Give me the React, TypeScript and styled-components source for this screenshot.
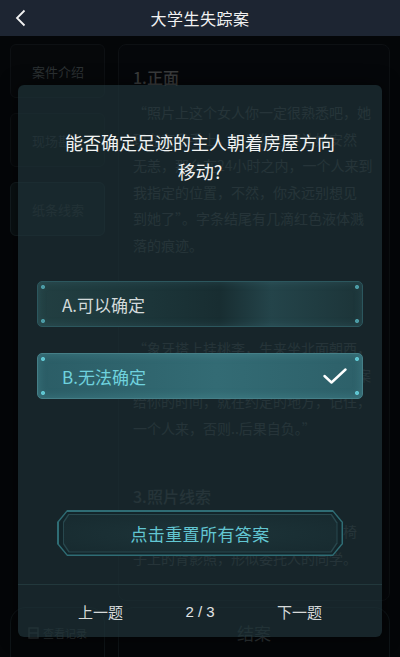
import React from 'react';
import styled, { createGlobalStyle } from 'styled-components';

const GlobalStyle = createGlobalStyle`
  html, body {
    margin: 0;
    padding: 0;
    background: #040608;
  }
  body {
    font-family: "Noto Sans CJK SC", "Noto Sans", sans-serif;
    -webkit-font-smoothing: antialiased;
  }
  * {
    box-sizing: border-box;
  }
`;

const chamfer = (x: number, y: number) =>
  `polygon(${x}px 0, calc(100% - ${x}px) 0, 100% ${y}px, 100% calc(100% - ${y}px), calc(100% - ${x}px) 100%, ${x}px 100%, 0 calc(100% - ${y}px), 0 ${y}px)`;

const Screen = styled.div`
  position: relative;
  width: 400px;
  height: 657px;
  overflow: hidden;
  display: flex;
  flex-direction: column;
  background: #040608;
`;

const Header = styled.header`
  flex: none;
  height: 36px;
  display: grid;
  grid-template-columns: 44px 1fr 44px;
  align-items: center;
  background: #1d2532;
`;

const BackButton = styled.button`
  display: flex;
  align-items: center;
  justify-content: flex-start;
  padding: 0 0 0 15px;
  height: 100%;
  border: 0;
  background: none;
  color: #f2f2f2;
`;

const Title = styled.h1`
  margin: 0;
  text-align: center;
  font-size: 16px;
  font-weight: 400;
  color: #f2f2f2;
  letter-spacing: 0.5px;
`;

const Body = styled.div`
  flex: 1;
  min-height: 0;
  display: flex;
  gap: 13px;
  padding: 8px 10px 6px;
`;

const Sidebar = styled.nav`
  width: 95px;
  flex: none;
  display: flex;
  flex-direction: column;
  gap: 15px;
`;

const Tab = styled.div<{ $active?: boolean }>`
  height: 54px;
  display: flex;
  align-items: center;
  padding-left: 21px;
  border-radius: 6px;
  border: 1px solid ${(p) => (p.$active ? '#141d20' : '#0d1013')};
  background: ${(p) => (p.$active ? '#0a1113' : '#06080a')};
  color: #2c3133;
  font-size: 13px;
`;

const Panel = styled.section`
  flex: 1;
  min-width: 0;
  padding: 21px 8px 0 14px;
  border-radius: 8px;
  border: 1px solid #0d1013;
  background: #05070a;
  overflow: hidden;
`;

const Section = styled.div`
  margin-bottom: 44px;
`;

const SectionTitle = styled.h3`
  margin: 0 0 11px;
  font-size: 16px;
  line-height: 22px;
  font-weight: 500;
  color: #3a3c3d;
`;

const Paragraph = styled.p`
  margin: 0;
  font-size: 14px;
  line-height: 26.5px;
  color: #3a3c3d;
`;

const Line = styled.span`
  display: block;
  white-space: nowrap;
`;

const BottomBar = styled.div`
  flex: none;
  height: 50px;
  display: flex;
  gap: 13px;
  padding: 0 10px;
`;

const BarButton = styled.div<{ $wide?: boolean }>`
  flex: ${(p) => (p.$wide ? 1 : 'none')};
  width: ${(p) => (p.$wide ? 'auto' : '95px')};
  display: flex;
  align-items: center;
  justify-content: center;
  gap: 4px;
  border-radius: 16px 16px 0 0;
  border: 1px solid #0e1417;
  border-bottom: 0;
  color: #2c3234;
  font-size: ${(p) => (p.$wide ? '17px' : '11px')};
`;

const Modal = styled.div`
  position: absolute;
  left: 18px;
  top: 85px;
  width: 364px;
  height: 552px;
  display: flex;
  flex-direction: column;
  border-radius: 6px;
  background: rgba(31, 50, 56, 0.72);
  box-shadow: 0 0 18px rgba(0, 0, 0, 0.55);
`;

const Question = styled.h2`
  margin: 43px 40px 0;
  font-size: 18px;
  line-height: 29px;
  font-weight: 400;
  text-align: center;
  color: #f1f3f3;
`;

const OptionList = styled.div`
  margin: 95px 19px 0;
  display: flex;
  flex-direction: column;
  gap: 26px;
`;

const dots = (c: string) =>
  [
    `radial-gradient(circle at 5px 5px, ${c} 1.6px, transparent 2.4px)`,
    `radial-gradient(circle at 5px calc(100% - 5px), ${c} 1.6px, transparent 2.4px)`,
    `radial-gradient(circle at calc(100% - 5px) 5px, ${c} 1.6px, transparent 2.4px)`,
    `radial-gradient(circle at calc(100% - 5px) calc(100% - 5px), ${c} 1.6px, transparent 2.4px)`,
  ].join(', ');

const Option = styled.button<{ $selected?: boolean }>`
  height: 46px;
  display: flex;
  align-items: center;
  justify-content: space-between;
  padding: 0 15px 0 24px;
  border-radius: 5px;
  font-family: inherit;
  font-size: 17px;
  text-align: left;
  border: 1.5px solid ${(p) => (p.$selected ? '#457f87' : '#2c575e')};
  color: ${(p) => (p.$selected ? '#6fd2de' : '#d3dadb')};
  background: ${(p) =>
    p.$selected
      ? `${dots('#5fc6d2')}, linear-gradient(90deg, #2b5d66 0%, #336b74 55%, #2d6069 100%)`
      : `${dots('#4b9aa4')}, linear-gradient(90deg, #223f42 0%, #1c3539 35%, #182d31 56%, #24444a 72%, #1c3438 100%)`};
  box-shadow: inset 0 0 10px rgba(110, 190, 200, ${(p) => (p.$selected ? 0.25 : 0.15)});
`;

const ResetFrame = styled.button`
  margin: 111px 39px 0;
  height: 46px;
  padding: 1.5px;
  border: 0;
  clip-path: ${chamfer(10, 12)};
  background: #2f6d75;
  font-family: inherit;
`;

const ResetGap = styled.div`
  height: 100%;
  padding: 2px 4px;
  clip-path: ${chamfer(9, 11)};
  background: #13252a;
`;

const ResetInner = styled.div`
  height: 100%;
  padding: 1px;
  clip-path: ${chamfer(6, 9)};
  background: #28484e;
`;

const ResetCore = styled.div`
  height: 100%;
  display: flex;
  align-items: center;
  justify-content: center;
  clip-path: ${chamfer(6, 9)};
  background: radial-gradient(ellipse at center, #1d3439 0%, #172a2f 100%);
  color: #62c6d2;
  font-size: 17px;
  letter-spacing: 0.4px;
`;

const Footer = styled.div`
  flex: 1;
  margin-top: 28px;
  display: flex;
  align-items: center;
  justify-content: space-between;
  padding: 0 60px;
  border-top: 1px solid #22383c;
`;

const FooterLink = styled.span`
  font-size: 15px;
  color: #d6d9d9;
`;

const Pager = styled.span`
  font-family: "Liberation Sans", "Noto Sans", sans-serif;
  font-size: 15px;
  color: #e2e4e4;
`;

const sections = [
  {
    title: '1.正面',
    lines: [
      '“照片上这个女人你一定很熟悉吧，她',
      '现在在我手上，如果你想要让她安然',
      '无恙，那么在24小时之内，一个人来到',
      '我指定的位置，不然，你永远别想见',
      '到她了”。字条结尾有几滴红色液体溅',
      '落的痕迹。',
    ],
  },
  {
    title: '2.背面',
    lines: [
      '“象牙塔上挂桃李，生来坐北面朝西，',
      '落日之前，尽头之处，她会告诉你答案',
      '给你的时间，就在约定的地方，记住，',
      '一个人来，否则..后果自负。”',
    ],
  },
  {
    title: '3.照片线索',
    lines: ['信封中的照片为一个女孩被捆绑在椅', '子上的背影照，形似委托人的同学。'],
  },
];

function App() {
  return (
    <>
      <GlobalStyle />
      <Screen>
        <Header>
          <BackButton aria-label="返回">
            <svg width="11" height="18" viewBox="0 0 11 18" fill="none">
              <polyline points="9.5,1.5 2,9 9.5,16.5" stroke="currentColor" strokeWidth="1.8" />
            </svg>
          </BackButton>
          <Title>大学生失踪案</Title>
          <span />
        </Header>

        <Body>
          <Sidebar>
            <Tab>案件介绍</Tab>
            <Tab>现场勘查</Tab>
            <Tab $active>纸条线索</Tab>
          </Sidebar>
          <Panel>
            {sections.map((s) => (
              <Section key={s.title}>
                <SectionTitle>{s.title}</SectionTitle>
                <Paragraph>
                  {s.lines.map((l) => (
                    <Line key={l}>{l}</Line>
                  ))}
                </Paragraph>
              </Section>
            ))}
          </Panel>
        </Body>

        <BottomBar>
          <BarButton>
            <svg width="11" height="12" viewBox="0 0 11 12" fill="none">
              <rect x="1" y="1" width="9" height="10" stroke="currentColor" strokeWidth="1.4" />
              <line x1="1" y1="6" x2="10" y2="6" stroke="currentColor" strokeWidth="1.4" />
            </svg>
            查看记录
          </BarButton>
          <BarButton $wide>结案</BarButton>
        </BottomBar>

        <Modal>
          <Question>能否确定足迹的主人朝着房屋方向移动?</Question>
          <OptionList>
            <Option>A.可以确定</Option>
            <Option $selected>
              B.无法确定
              <svg width="24" height="16" viewBox="0 0 24 16" fill="none">
                <polyline
                  points="1.5,8 8.5,14.5 22.5,1.5"
                  stroke="#ffffff"
                  strokeWidth="2.4"
                  strokeLinecap="round"
                  strokeLinejoin="round"
                />
              </svg>
            </Option>
          </OptionList>
          <ResetFrame>
            <ResetGap>
              <ResetInner>
                <ResetCore>点击重置所有答案</ResetCore>
              </ResetInner>
            </ResetGap>
          </ResetFrame>
          <Footer>
            <FooterLink>上一题</FooterLink>
            <Pager>2 / 3</Pager>
            <FooterLink>下一题</FooterLink>
          </Footer>
        </Modal>
      </Screen>
    </>
  );
}

export default App;
